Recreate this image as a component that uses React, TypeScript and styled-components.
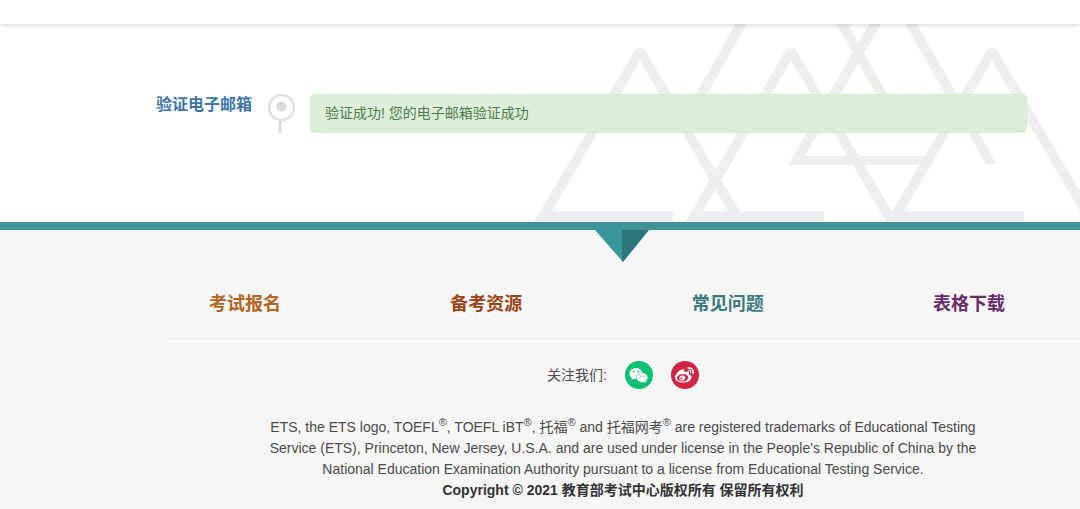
import React from "react";
import styled, { createGlobalStyle } from "styled-components";
import { FaWeibo, FaWeixin } from "react-icons/fa";

const GlobalStyle = createGlobalStyle`
  * { box-sizing: border-box; }
  body {
    margin: 0;
    background: #fff;
    color: #4a4a4a;
    font: 14px/21px "Liberation Sans", "Noto Sans CJK SC", sans-serif;
  }
`;

const Page = styled.div`
  display: flex;
  flex-direction: column;
  min-height: 100vh;
  overflow-x: hidden;
`;

const TopBar = styled.header`
  position: relative;
  z-index: 1;
  height: 24px;
  background: #fff;
  box-shadow: 0 1px 6px rgba(0, 0, 0, 0.16);
`;

const Hero = styled.main`
  position: relative;
  min-height: 198px;
  padding: 70px 53px 64px 156px;
`;

const Backdrop = styled.svg`
  position: absolute;
  right: 0;
  bottom: 0;
`;

const Step = styled.section`
  position: relative;
  display: flex;
  align-items: flex-start;
`;

const StepTitle = styled.h2`
  flex: none;
  width: 111px;
  margin: 0;
  color: #3b75a9;
  font-size: 16px;
  line-height: 22px;
`;

const Pin = styled.svg`
  flex: none;
  margin-right: 15px;
`;

const Alert = styled.div`
  flex: 1;
  padding: 8px 14px;
  border: 1px solid #d8ebce;
  border-radius: 4px;
  background: #ddefd8;
  color: #4d7a50;
`;

const Footer = styled.footer`
  flex: 1;
  padding: 0 0 8px 168px;
  border-top: 8px solid #3c9496;
  background: #f6f6f6;
`;

const Centered = styled.div`
  display: flex;
  flex-direction: column;
  align-items: center;
  padding-right: 2px;
`;

const Marker = styled.svg`
  display: block;
`;

const Nav = styled.nav`
  display: flex;
  justify-content: space-between;
  padding: 29px 75px 24px 41px;
  border-bottom: 1px solid #fff;
`;

const NavLink = styled.a<{ $color: string }>`
  color: ${(p) => p.$color};
  font-size: 18px;
  font-weight: bold;
  line-height: 26px;
  text-decoration: none;
`;

const Social = styled.div`
  display: flex;
  align-items: center;
  gap: 18px;
  padding: 19px 0 28px;
`;

const SocialLink = styled.a<{ $color: string }>`
  display: flex;
  align-items: center;
  justify-content: center;
  width: 28px;
  height: 28px;
  border-radius: 50%;
  background: ${(p) => p.$color};
  color: #fff;
  font-size: 19px;
`;

const Legal = styled.p`
  max-width: 724px;
  margin: 0;
  text-align: center;

  sup {
    font-size: 11px;
    line-height: 0;
  }
`;

const Copyright = styled.strong`
  display: block;
  color: #333;
`;

const links = [
  { label: "考试报名", color: "#b5651d" },
  { label: "备考资源", color: "#9c4312" },
  { label: "常见问题", color: "#3d7a80" },
  { label: "表格下载", color: "#6b2c6b" },
];

export default function App() {
  return (
    <>
      <GlobalStyle />
      <Page>
        <TopBar />
        <Hero>
          <Backdrop width="550" height="198" viewBox="530 24 550 198" aria-hidden="true">
            <g fill="none" stroke="#eeeeee" strokeWidth="10" strokeLinejoin="bevel">
              <path d="M538 225L640 51L742 225" />
              <path d="M689 225L791 51L894 225" />
              <path d="M890 225L992 51L1094 225" />
              <path d="M744 19L694 107" />
              <path d="M839 19L889 107" />
            </g>
            <g fill="#eeeeee">
              <path d="M540 211H673V222H535Z" />
              <path d="M692 211H824V222H686Z" />
              <path d="M893 211H1024V222H887Z" />
              <path d="M869 24H881L805 156H928L923 165H788Z" />
              <path d="M905 24H917L997 164H986Z" />
            </g>
          </Backdrop>
          <Step>
            <StepTitle>验证电子邮箱</StepTitle>
            <Pin width="28" height="39" viewBox="0 0 28 39" aria-hidden="true">
              <circle cx="14.5" cy="13.5" r="12.5" fill="#fff" stroke="#e0e0e0" strokeWidth="2.5" />
              <circle cx="14.5" cy="12.5" r="5" fill="#dadada" />
              <path d="M13 26V39" stroke="#dedede" strokeWidth="3" />
            </Pin>
            <Alert role="status">验证成功! 您的电子邮箱验证成功</Alert>
          </Step>
        </Hero>
        <Footer>
          <Centered>
            <Marker width="56" height="32" viewBox="0 0 56 32" aria-hidden="true">
              <path d="M0 0H28V32Z" fill="#37979a" />
              <path d="M27 0H54L28 32L27 31Z" fill="#2b777b" />
            </Marker>
          </Centered>
          <Nav>
            {links.map((l) => (
              <NavLink key={l.label} href="#" $color={l.color}>
                {l.label}
              </NavLink>
            ))}
          </Nav>
          <Centered>
            <Social>
              <span>关注我们:</span>
              <SocialLink href="#" aria-label="微信" $color="#0dc072">
                <FaWeixin />
              </SocialLink>
              <SocialLink href="#" aria-label="微博" $color="#cf2542">
                <FaWeibo />
              </SocialLink>
            </Social>
            <Legal>
              ETS, the ETS logo, TOEFL<sup>®</sup>, TOEFL iBT<sup>®</sup>, 托福<sup>®</sup> and 托福网考
              <sup>®</sup> are registered trademarks of Educational Testing Service (ETS), Princeton,
              New Jersey, U.S.A. and are used under license in the People's Republic of China by the
              National Education Examination Authority pursuant to a license from Educational Testing
              Service.
              <Copyright>Copyright © 2021 教育部考试中心版权所有 保留所有权利</Copyright>
            </Legal>
          </Centered>
        </Footer>
      </Page>
    </>
  );
}
